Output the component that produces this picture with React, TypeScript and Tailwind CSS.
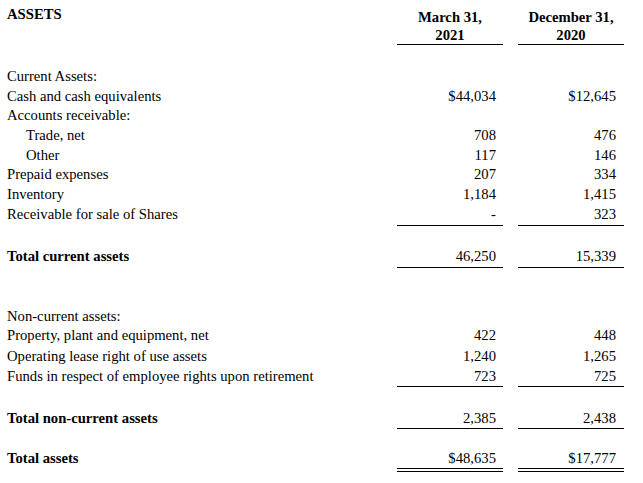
const rowGrid = "grid grid-cols-[1fr_106px_106px] gap-x-[15px] pl-[7px] pr-[19px]";

type Line = {
  label: string;
  a?: string;
  b?: string;
  indent?: boolean;
  bold?: boolean;
  h?: string;
  rule?: "single" | "double";
};

function Row({ label, a, b, indent, bold, h = "h-[19.67px]", rule }: Line) {
  const ruleCls =
    rule === "single"
      ? "border-b border-black"
      : rule === "double"
        ? "border-b-[4px] border-double border-black"
        : "";
  return (
    <div className={`${rowGrid} ${h} leading-[20px]`}>
      <div className={`${indent ? "pl-[19px]" : ""} ${bold ? "font-bold" : ""} whitespace-nowrap`}>
        {label}
      </div>
      <div className={`pr-[7px] text-right ${ruleCls}`}>{a}</div>
      <div className={`pr-[8px] text-right ${ruleCls}`}>{b}</div>
    </div>
  );
}

export default function App() {
  return (
    <div className="h-[483px] w-[643px] overflow-hidden bg-white font-['Liberation_Serif','Times_New_Roman',serif] text-[14.67px] text-black">
      {/* header */}
      <div className={`${rowGrid} h-[44px]`}>
        <div className="pt-[5px] font-bold leading-[18px]">ASSETS</div>
        <div className="border-b border-black pt-[8px] text-center font-bold leading-[18px]">
          March 31,
          <br />
          2021
        </div>
        <div className="border-b border-black pt-[8px] text-center font-bold leading-[18px]">
          December 31,
          <br />
          2020
        </div>
      </div>

      <div className="mt-[22px]">
        <Row label="Current Assets:" />
        <Row label="Cash and cash equivalents" a="$44,034" b="$12,645" />
        <Row label="Accounts receivable:" />
        <Row label="Trade, net" a="708" b="476" indent />
        <Row label="Other" a="117" b="146" indent />
        <Row label="Prepaid expenses" a="207" b="334" />
        <Row label="Inventory" a="1,184" b="1,415" />
        <Row label="Receivable for sale of Shares" a="-" b="323" h="h-[22.35px]" rule="single" />
      </div>

      <div className="mt-[20.55px]">
        <Row label="Total current assets" a="46,250" b="15,339" bold h="h-[21.45px]" rule="single" />
      </div>

      <div className="mt-[38.5px]">
        <Row label="Non-current assets:" h="h-[19px]" />
        <Row label="Property, plant and equipment, net" a="422" b="448" h="h-[20.5px]" />
        <Row label="Operating lease right of use assets" a="1,240" b="1,265" h="h-[20px]" />
        <Row
          label="Funds in respect of employee rights upon retirement"
          a="723"
          b="725"
          h="h-[21.45px]"
          rule="single"
        />
      </div>

      <div className="mt-[20.55px]">
        <Row label="Total non-current assets" a="2,385" b="2,438" bold h="h-[21px]" rule="single" />
      </div>

      <div className="mt-[19.55px]">
        <Row label="Total assets" a="$48,635" b="$17,777" bold h="h-[23.95px]" rule="double" />
      </div>
    </div>
  );
}
